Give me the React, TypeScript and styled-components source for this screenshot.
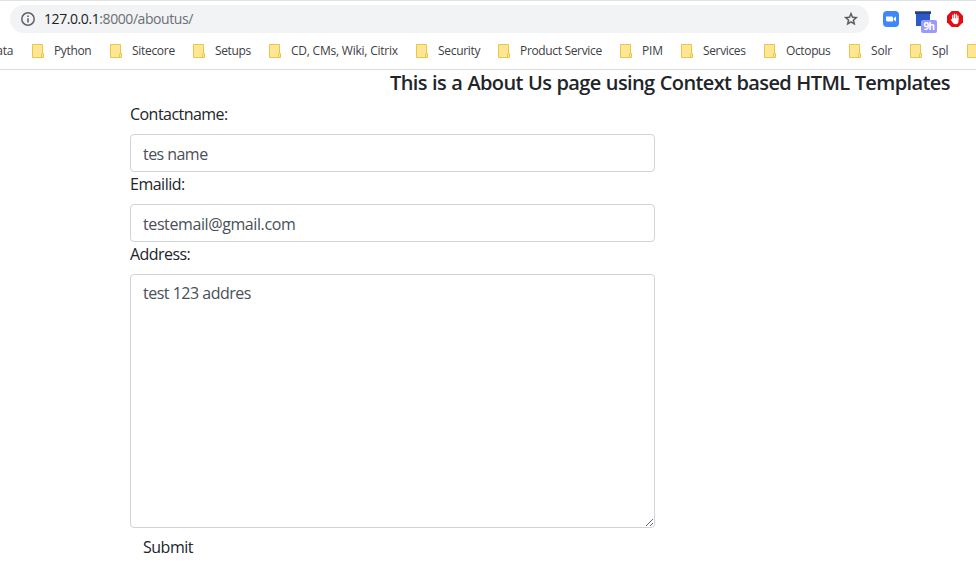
import React from "react";
import styled, { createGlobalStyle } from "styled-components";

const GlobalStyle = createGlobalStyle`
  *, *::before, *::after { box-sizing: border-box; }
  html, body { margin: 0; height: 575px; overflow: hidden; background: #fff; }
  body { font-family: "Segoe UI", "Open Sans", "Noto Sans", sans-serif; color: #212529; }
`;

const Window = styled.div`
  width: 976px;
  height: 575px;
  overflow: hidden;
`;

const BrowserChrome = styled.header`
  height: 70px;
  border-top: 1px solid #dee1e6;
  border-bottom: 1px solid #dadce0;
`;

const Toolbar = styled.div`
  display: flex;
  align-items: center;
  height: 36px;
  padding-left: 10px;
`;

const AddressBar = styled.div`
  display: flex;
  align-items: center;
  width: 859px;
  height: 28px;
  padding: 0 10px 0 11px;
  border-radius: 14px;
  background: #f1f3f4;
`;

const Url = styled.span`
  flex: 1;
  margin-left: 9px;
  font-size: 14px;
  line-height: 20px;
  letter-spacing: -0.42px;
  color: #6b6f74;
`;

const Host = styled.span`
  color: #202124;
`;

const Extensions = styled.div`
  display: flex;
  align-items: center;
  margin-left: 14px;
  height: 28px;
`;

const CalendarExtension = styled.div`
  position: relative;
  width: 24px;
  height: 24px;
  margin: 0 9px 0 15px;
`;

const Badge = styled.span`
  position: absolute;
  left: 7px;
  top: 13px;
  width: 16px;
  height: 13px;
  border-radius: 2px;
  background: #9a9af8;
  color: #fff;
  font-family: "Noto Sans", sans-serif;
  font-size: 10px;
  font-weight: 700;
  line-height: 13px;
  letter-spacing: -0.5px;
  text-align: center;
`;

const Bookmarks = styled.nav`
  display: flex;
  height: 32px;
  overflow: hidden;
`;

const Bookmark = styled.div<{ $width: number; $tracking: number }>`
  display: flex;
  flex: none;
  align-items: center;
  gap: 10px;
  width: ${(p) => p.$width}px;
  height: 28px;
  font-size: 12px;
  line-height: 16px;
  letter-spacing: ${(p) => p.$tracking}px;
  color: #3c4043;
  white-space: nowrap;
`;

const CutBookmark = styled(Bookmark)`
  justify-content: flex-end;
  padding-right: 19px;
`;

const Heading = styled.h5`
  width: 560px;
  margin: 0 0 7px 390px;
  padding-top: 1px;
  font-size: 20px;
  font-weight: 600;
  line-height: 24px;
  letter-spacing: -0.62px;
  word-spacing: 0.6px;
  white-space: nowrap;
`;

const Form = styled.form`
  width: 525px;
  margin-left: 130px;
`;

const Label = styled.label<{ $tracking: number }>`
  display: block;
  height: 24px;
  margin-bottom: 8px;
  font-size: 16px;
  line-height: 24px;
  letter-spacing: ${(p) => p.$tracking}px;
`;

const Input = styled.input<{ $tracking: number }>`
  display: block;
  width: 100%;
  height: 38px;
  padding: 7px 12px 5px;
  border: 1px solid #ced4da;
  border-radius: 4px;
  background: #fff;
  color: #495057;
  font: inherit;
  font-size: 16px;
  line-height: 24px;
  letter-spacing: ${(p) => p.$tracking}px;
  outline: none;
`;

const Textarea = styled.textarea`
  display: block;
  width: 100%;
  height: 254px;
  padding: 6px 12px;
  border: 1px solid #ced4da;
  border-radius: 4px;
  background: #fff;
  color: #495057;
  font: inherit;
  font-size: 16px;
  line-height: 24px;
  letter-spacing: -0.5px;
  resize: vertical;
  outline: none;
`;

const SubmitButton = styled.button`
  height: 38px;
  padding: 6px 12px;
  border: 1px solid transparent;
  background: transparent;
  color: #212529;
  font: inherit;
  font-size: 16px;
  line-height: 24px;
  letter-spacing: -0.5px;
`;

const InfoIcon = () => (
  <svg width="14" height="14" viewBox="0 0 14 14">
    <circle cx="7" cy="7" r="6.2" fill="none" stroke="#5f6368" strokeWidth="1.5" />
    <path d="M6.2 6.2h1.6v4.3H6.2zM6.2 3.4h1.6V5H6.2z" fill="#5f6368" />
  </svg>
);

const StarIcon = () => (
  <svg width="16" height="16" viewBox="0 0 24 24">
    <path
      d="M22 9.24l-7.19-.62L12 2 9.19 8.63 2 9.24l5.46 4.73L5.82 21 12 17.27 18.18 21l-1.63-7.03L22 9.24zM12 15.4l-3.76 2.27 1-4.28-3.32-2.88 4.38-.38L12 6.1l1.71 4.04 4.38.38-3.32 2.88 1 4.28L12 15.4z"
      fill="#4d5156"
      stroke="#4d5156"
      strokeWidth=".5"
    />
  </svg>
);

const ZoomIcon = () => (
  <svg width="16" height="16" viewBox="0 0 16 16">
    <rect width="16" height="16" rx="4" fill="#4087fc" />
    <path d="M3 5.5h5.6c.8 0 1.4.6 1.4 1.4v3.6H4.4C3.6 10.5 3 9.9 3 9.1zM10.600 7.200L13 5.500v5l-2.400-1.700z" fill="#fff" />
  </svg>
);

const CalendarIcon = () => (
  <svg width="24" height="24" viewBox="0 0 24 24">
    <path d="M2 5h14v14H2z" fill="#2a5bc7" />
    <path d="M1 4h16v3H1z" fill="#24418f" />
    <path d="M1 4h16v1H1z" fill="#66728c" />
  </svg>
);

const BlockIcon = () => (
  <svg width="16" height="16" viewBox="0 0 16 16">
    <path d="M4.700 0h6.600L16 4.700v6.600L11.300 16H4.700L0 11.300V4.700z" fill="#e40d13" />
    <path
      d="M5.700 8.500V4.400M7.400 7.500V3M9.200 7.500V3.300M10.900 8.500V4.900"
      stroke="#fff"
      strokeWidth="1.200"
      strokeLinecap="round"
    />
    <path d="M5.100 7.200h6.400v3c0 1.900-1.100 3-2.800 3-1.500 0-2.300-.6-3-1.700L3.900 9c-.4-.7.500-1.200 1.200-.5z" fill="#fff" />
  </svg>
);

const FolderIcon = () => (
  <svg width="12" height="14" viewBox="0 0 12 14">
    <path d="M.5.500h10v9h1v4H.5z" fill="#ffe693" stroke="#e9c64b" />
    <path d="M9.500 13V10.500q0-1 1-1" fill="none" stroke="#e9c64b" />
  </svg>
);

const bookmarks = [
  { name: "Python", width: 78, tracking: -0.35 },
  { name: "Sitecore", width: 83, tracking: -0.3 },
  { name: "Setups", width: 76, tracking: -0.35 },
  { name: "CD, CMs, Wiki, Citrix", width: 147, tracking: -0.22 },
  { name: "Security", width: 82, tracking: -0.3 },
  { name: "Product Service", width: 122, tracking: -0.34 },
  { name: "PIM", width: 61, tracking: -0.2 },
  { name: "Services", width: 83, tracking: -0.36 },
  { name: "Octopus", width: 85, tracking: -0.36 },
  { name: "Solr", width: 61, tracking: -0.2 },
  { name: "Spl", width: 57, tracking: -0.2 },
  { name: "", width: 60, tracking: 0 },
];

export default function App() {
  return (
    <Window>
      <GlobalStyle />
      <BrowserChrome>
        <Toolbar>
          <AddressBar>
            <InfoIcon />
            <Url>
              <Host>127.0.0.1</Host>:8000/aboutus/
            </Url>
            <StarIcon />
          </AddressBar>
          <Extensions>
            <ZoomIcon />
            <CalendarExtension>
              <CalendarIcon />
              <Badge>9h</Badge>
            </CalendarExtension>
            <BlockIcon />
          </Extensions>
        </Toolbar>
        <Bookmarks>
          <CutBookmark $width={32} $tracking={-0.3}>ata</CutBookmark>
          {bookmarks.map((b, i) => (
            <Bookmark key={i} $width={b.width} $tracking={b.tracking}>
              <FolderIcon />
              {b.name}
            </Bookmark>
          ))}
        </Bookmarks>
      </BrowserChrome>
      <main>
        <Heading>This is a About Us page using Context based HTML Templates</Heading>
        <Form>
          <Label htmlFor="name" $tracking={-0.54}>Contactname:</Label>
          <Input id="name" $tracking={-0.55} defaultValue="tes name" />
          <Label htmlFor="email" $tracking={-0.5}>Emailid:</Label>
          <Input id="email" $tracking={-0.4} defaultValue="testemail@gmail.com" />
          <Label htmlFor="address" $tracking={-0.55}>Address:</Label>
          <Textarea id="address" defaultValue="test 123 addres" />
          <SubmitButton type="button">Submit</SubmitButton>
        </Form>
      </main>
    </Window>
  );
}
